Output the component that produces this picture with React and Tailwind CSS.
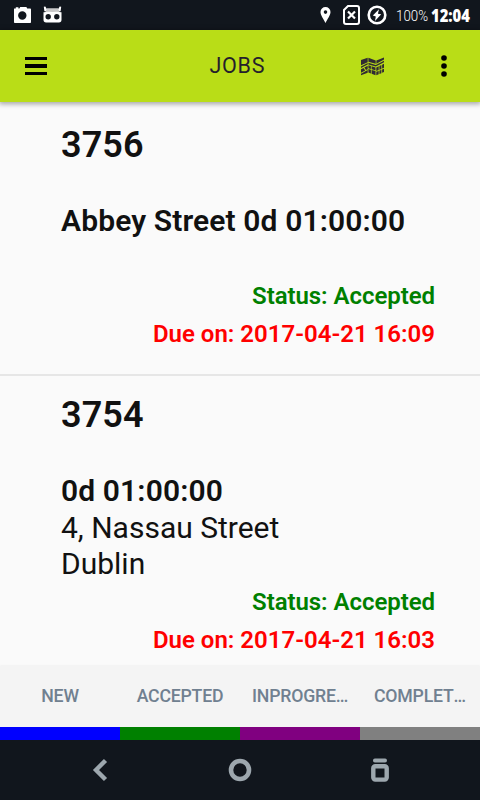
const jobs = [
    {
        id: "3756",
        title: "Abbey Street 0d 01:00:00",
        address: [],
        status: "Accepted",
        due: "2017-04-21 16:09",
    },
    {
        id: "3754",
        title: "0d 01:00:00",
        address: ["4, Nassau Street", "Dublin"],
        status: "Accepted",
        due: "2017-04-21 16:03",
    },
];

const tabs = [
    { label: "NEW", color: "bg-[#0000ff]", padding: "px-3" },
    { label: "ACCEPTED", color: "bg-[#008000]", padding: "px-3" },
    { label: "INPROGRESS", color: "bg-[#800080]", padding: "pl-3 pr-[10px]" },
    { label: "COMPLETED", color: "bg-[#808080]", padding: "pl-[14px] pr-[10px]" },
];

const StatusBar = () => (
    <div className="flex h-[30px] shrink-0 items-center justify-between bg-[#11161d] pl-[13px] pr-[9px] text-white">
        <div className="flex items-center gap-[11px]">
            <svg width="19" height="18" viewBox="0 0 19 18" fill="currentColor">
                <path
                    fillRule="evenodd"
                    d="M1.200 2.500h1.600V1.200h2.600v1.300h1L7.200 1h6.200l.8 1.500h3q.8 0 .8.8v13q0 .8-.8.8H1.800q-.8 0-.8-.8V3zM9.300 5.300a4.200 4.200 0 1 0 0 8.400a4.200 4.200 0 1 0 0-8.400z"
                />
            </svg>
            <svg width="19" height="18" viewBox="0 0 19 18" fill="currentColor">
                <path d="M.8.8 2.300.4 4 3.200H15L16.700.4 18.200.8 17.600 5.200H1.400z" />
                <path d="M4 2.300h11l2 4.700h-15z" fill="#c9c9c9" />
                <path
                    fillRule="evenodd"
                    d="M.5 6.300q4.500-.8 9-.2q4.500-.6 9 .2v7.500q0 2.600-2.600 2.600H3.100Q.5 16.400.5 13.800zM5.200 8a2.700 2.700 0 1 0 0 5.400a2.700 2.700 0 1 0 0-5.400zM13.800 8a2.700 2.700 0 1 0 0 5.400a2.700 2.700 0 1 0 0-5.400z"
                />
            </svg>
        </div>
        <div className="flex items-center">
            <svg className="mr-[12px]" width="11" height="16" viewBox="0 0 11 16" fill="currentColor">
                <path
                    fillRule="evenodd"
                    d="M5.500 0a5 5 0 0 1 5 5c0 3.500-3 6.500-5 11C3.500 11.500.5 8.500.5 5a5 5 0 0 1 5-5zM5.500 3.300a1.800 1.800 0 1 0 0 3.600a1.800 1.800 0 1 0 0-3.600z"
                />
            </svg>
            <svg className="mr-[7px]" width="17" height="20" viewBox="0 0 17 20" fill="none" stroke="currentColor" strokeWidth="2">
                <path d="M5 1h9q2 0 2 2v14q0 2-2 2H3q-2 0-2-2V5z" />
                <path d="m5 6.500 7 7m0-7-7 7" strokeWidth="2.200" />
            </svg>
            <svg className="mr-[9px]" width="20" height="20" viewBox="0 0 20 20">
                <circle cx="10" cy="10" r="8.300" fill="none" stroke="currentColor" strokeWidth="2.600" />
                <path d="M12 4.300 5.800 10.600l3 .8-.8 4.500 6.200-6.600-3.300-.6z" fill="currentColor" />
            </svg>
            <span className="w-[32px] origin-left scale-x-[0.95] whitespace-nowrap pt-px text-sm font-light">
                100%
            </span>
            <span className="ml-[3px] w-[40px] origin-left scale-x-[0.87] whitespace-nowrap pt-px font-['Noto_Sans',sans-serif] text-[17px] font-black leading-5">
                12:04
            </span>
        </div>
    </div>
);

const MapIcon = () => (
    <svg className="mt-px" width="23" height="19" viewBox="0 0 23 20" preserveAspectRatio="none" fill="#302b33">
        <path d="M0 3.200 6.700.7v4.700L0 8.700z" />
        <path d="m7.400.7 7.300 2.900v3.600L7.400 5z" />
        <path d="M15.400 3.600 23 .5v2.200L15.400 7z" />
        <path d="M0 10 6.700 6.400v1.500L0 11.600zM7.400 6l7.400 2.400L23 3.900v1.700l-8.200 4.500L7.400 7.800z" />
        <path d="m0 12.800 2.500-1.300 1.700 2.600L0 16.600zM3.300 11l3.400-1.800v3.700l-1.700.8zM0 17.500l6.700-3.700v2.700L0 19.300z" />
        <path d="m7.400 8.700 2.500.8v3l-2.500-.6zM10.600 9.800l3.900 1.200V14l-3.900-1.100zM7.400 12.700l2.500.6v4.100l-2.500-1zM10.600 13.700l3.900 1.100v4.500l-3.900-1.600z" />
        <path d="m15.300 11 2.400-1.200v4l-2.400.9zM18.400 9.500l2-1v4l-2 .9zM21.100 8.100 23 7.200v4.100l-1.900.8zM15.300 15.600l2.400-.9v3.500l-2.400 1zM18.400 14.400l2-.9v3.500l-2 .9zM21.100 13.100l1.900-.8v3.500l-1.900.8z" />
    </svg>
);

const Header = () => (
    <header className="z-10 grid h-[72px] shrink-0 grid-cols-[200px_1fr_200px] items-center bg-[#b9dd17] text-black shadow-[0_1px_5px_1px_rgba(0,0,0,0.35)]">
        <button className="ml-[25px] flex w-[22px] flex-col gap-1">
            <span className="h-[3.500px] w-full bg-black" />
            <span className="h-[3.500px] w-full bg-black" />
            <span className="h-[3.500px] w-full bg-black" />
        </button>
        <h1 className="whitespace-nowrap pl-[9.500px] text-[21.500px] font-[450] leading-8 tracking-[0.7px] text-[#251f2b]">
            JOBS
        </h1>
        <div className="flex items-center justify-between pl-[81px] pr-[33px]">
            <MapIcon />
            <svg width="6" height="22" viewBox="0 0 6 22">
                <circle cx="3" cy="3" r="2.800" />
                <circle cx="3" cy="11" r="2.800" />
                <circle cx="3" cy="19" r="2.800" />
            </svg>
        </div>
    </header>
);

const Job = ({ job }) => (
    <li className="flex shrink-0 flex-col border-b-2 border-[#e6e6e6] pb-[21px] pl-[61px] pr-[45px] pt-[18px]">
        <h2 className="text-4xl leading-[42px] font-semibold tracking-[0.1px]">{job.id}</h2>
        <h3 className="mt-[37px] text-[30px] leading-9 font-semibold tracking-[0.12px]">{job.title}</h3>
        <div className="mt-px min-h-9 text-[30px] leading-9">
            {job.address.map((line) => (
                <p key={line}>{line}</p>
            ))}
        </div>
        <div className="mt-[2px] text-right text-2xl leading-[37.500px] font-semibold">
            <p className="tracking-[-0.06px] text-[#008000]">Status: {job.status}</p>
            <p className="text-[#ff0000]">Due on: {job.due}</p>
        </div>
    </li>
);

const NavBar = () => (
    <nav className="grid h-[60px] shrink-0 grid-cols-[200px_80px_200px] items-center justify-items-center bg-[#11161d] text-[#9da7ae]">
        <svg width="16" height="24" viewBox="0 0 16 24" fill="none" stroke="currentColor" strokeWidth="4.400">
            <path d="M13.500 2.500 4 12l9.500 9.500" />
        </svg>
        <svg width="24" height="24" viewBox="0 0 24 24" fill="none" stroke="currentColor" strokeWidth="4.600">
            <circle cx="12" cy="12" r="9" />
        </svg>
        <svg width="18" height="24" viewBox="0 0 18 24" fill="none" stroke="currentColor">
            <path d="M3.900 2.500h10.200" strokeWidth="3.800" strokeLinecap="round" />
            <rect x="2.300" y="8.200" width="13.400" height="13.400" rx="2" strokeWidth="4.400" />
        </svg>
    </nav>
);

const App = () => {
    return (
        <div className="flex h-screen w-full flex-col overflow-hidden bg-[#fafafa] font-['Roboto',sans-serif] text-[#111]">
            <StatusBar />
            <Header />
            <ul className="flex min-h-0 flex-1 flex-col overflow-hidden pt-[4px]">
                {jobs.map((job) => (
                    <Job key={job.id} job={job} />
                ))}
            </ul>
            <div className="grid h-[74px] shrink-0 grid-cols-4 bg-[#f4f4f4] shadow-[0_0_2px_rgba(0,0,0,0.08)]">
                {tabs.map((tab) => (
                    <button key={tab.label} className="flex min-w-0 flex-col">
                        <span
                            className={`w-full truncate text-center text-[17.700px] leading-[61px] font-[480] tracking-[-0.2px] text-[#708090] ${tab.padding}`}>
                            {tab.label}
                        </span>
                        <span className={`mt-auto h-[13px] w-full shrink-0 ${tab.color}`} />
                    </button>
                ))}
            </div>
            <NavBar />
        </div>
    );
};

export default App;
